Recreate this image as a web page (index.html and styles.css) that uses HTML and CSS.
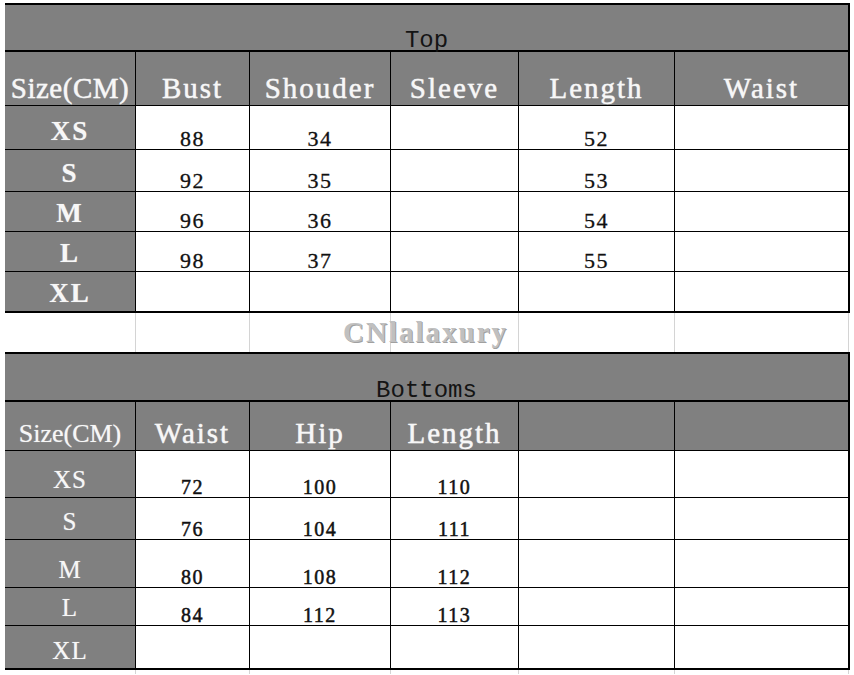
FILE: index.html
```html
<!DOCTYPE html>
<html>
<head>
<meta charset="utf-8">
<link rel="stylesheet" href="styles.css">
</head>
<body>
<div class="page">
  <div class="sheet">
    <section class="block block-top">
      <div class="title">Top</div>
      <div class="grid grid-top">
        <div class="cell head head-size">Size(CM)</div>
        <div class="cell head">Bust</div>
        <div class="cell head">Shouder</div>
        <div class="cell head">Sleeve</div>
        <div class="cell head">Length</div>
        <div class="cell head">Waist</div>

        <div class="cell label">XS</div>
        <div class="cell num">88</div>
        <div class="cell num">34</div>
        <div class="cell num"></div>
        <div class="cell num">52</div>
        <div class="cell num"></div>

        <div class="cell label">S</div>
        <div class="cell num">92</div>
        <div class="cell num">35</div>
        <div class="cell num"></div>
        <div class="cell num">53</div>
        <div class="cell num"></div>

        <div class="cell label">M</div>
        <div class="cell num">96</div>
        <div class="cell num">36</div>
        <div class="cell num"></div>
        <div class="cell num">54</div>
        <div class="cell num"></div>

        <div class="cell label">L</div>
        <div class="cell num">98</div>
        <div class="cell num">37</div>
        <div class="cell num"></div>
        <div class="cell num">55</div>
        <div class="cell num"></div>

        <div class="cell label">XL</div>
        <div class="cell num"></div>
        <div class="cell num"></div>
        <div class="cell num"></div>
        <div class="cell num"></div>
        <div class="cell num"></div>
      </div>
    </section>

    <div class="grid spacer-row">
      <div class="cell blank"></div>
      <div class="cell blank"></div>
      <div class="cell blank"></div>
      <div class="cell blank"></div>
      <div class="cell blank"></div>
      <div class="cell blank"></div>
      <span class="watermark">CNlalaxury</span>
    </div>

    <section class="block block-bottom">
      <div class="title title-bottom">Bottoms</div>
      <div class="grid grid-bottom">
        <div class="cell head head-alt">Size(CM)</div>
        <div class="cell head">Waist</div>
        <div class="cell head">Hip</div>
        <div class="cell head">Length</div>
        <div class="cell head"></div>
        <div class="cell head"></div>

        <div class="cell label label-alt">XS</div>
        <div class="cell num num-alt">72</div>
        <div class="cell num num-alt">100</div>
        <div class="cell num num-alt">110</div>
        <div class="cell num"></div>
        <div class="cell num"></div>

        <div class="cell label label-alt">S</div>
        <div class="cell num num-alt">76</div>
        <div class="cell num num-alt">104</div>
        <div class="cell num num-alt">111</div>
        <div class="cell num"></div>
        <div class="cell num"></div>

        <div class="cell label label-alt">M</div>
        <div class="cell num num-alt">80</div>
        <div class="cell num num-alt">108</div>
        <div class="cell num num-alt">112</div>
        <div class="cell num"></div>
        <div class="cell num"></div>

        <div class="cell label label-alt">L</div>
        <div class="cell num num-alt">84</div>
        <div class="cell num num-alt">112</div>
        <div class="cell num num-alt">113</div>
        <div class="cell num"></div>
        <div class="cell num"></div>

        <div class="cell label label-alt">XL</div>
        <div class="cell num"></div>
        <div class="cell num"></div>
        <div class="cell num"></div>
        <div class="cell num"></div>
        <div class="cell num"></div>
      </div>
    </section>

    <div class="grid tail-row">
      <div class="cell blank"></div>
      <div class="cell blank"></div>
      <div class="cell blank"></div>
      <div class="cell blank"></div>
      <div class="cell blank"></div>
      <div class="cell blank"></div>
    </div>
  </div>
</div>
</body>
</html>
```

FILE: styles.css
```css
* {
  box-sizing: border-box;
}

html, body {
  margin: 0;
  padding: 0;
  background: #ffffff;
}

body {
  width: 854px;
  height: 675px;
  overflow: hidden;
}

.page {
  padding: 3px 0 0 5px;
}

.sheet {
  width: 845px;
  display: flex;
  flex-direction: column;
}

.block {
  width: 845px;
  border-top: 2px solid #000;
  border-right: 2px solid #000;
  border-bottom: 2px solid #000;
  background: #000;
}

.title {
  height: 47px;
  background: #808080;
  border-bottom: 2px solid #000;
  display: flex;
  justify-content: center;
  align-items: flex-end;
  font-family: "Liberation Mono", "DejaVu Sans Mono", monospace;
  font-size: 24px;
  line-height: 18px;
  color: #141414;
  padding-bottom: 0;
}

.title-bottom {
  height: 48px;
}

.grid {
  display: grid;
  grid-template-columns: 130px 113px 140px 127px 155px 173px;
  column-gap: 1px;
  row-gap: 1px;
  background: #000;
}

.grid-top {
  grid-template-rows: 53px 43px 41px 39px 39px 39px;
}

.grid-bottom {
  grid-template-rows: 48px 46px 41px 47px 37px 42px;
}

.cell {
  display: flex;
  justify-content: center;
  align-items: flex-end;
  white-space: nowrap;
}

.head {
  background: #808080;
  color: #f7f7f7;
  font-family: "Liberation Serif", "Times New Roman", serif;
  font-size: 29px;
  letter-spacing: 2px;
  line-height: normal;
  padding-bottom: 0;
  -webkit-text-stroke: 0.3px #f7f7f7;
  text-shadow: 0 0 1px rgba(255, 255, 255, 0.6);
}

.head-size {
  letter-spacing: 0.5px;
}

.head-alt {
  font-size: 26px;
  letter-spacing: 0;
  padding-bottom: 1px;
  -webkit-text-stroke: 0;
}

.label {
  background: #808080;
  color: #f7f7f7;
  font-family: "Liberation Serif", "Times New Roman", serif;
  font-weight: bold;
  font-size: 27px;
  letter-spacing: 2px;
  line-height: normal;
  padding-bottom: 2px;
  text-shadow: 0 0 1px rgba(255, 255, 255, 0.5);
}

.label-alt {
  font-weight: normal;
  font-size: 25px;
  letter-spacing: 1px;
  padding-bottom: 3px;
}

.num {
  background: #ffffff;
  color: #111;
  font-family: "Liberation Serif", "Times New Roman", serif;
  font-size: 22px;
  letter-spacing: 1.5px;
  line-height: 20px;
  padding-bottom: 0;
  -webkit-text-stroke: 0.3px #111;
}

.num-alt {
  font-size: 20px;
  line-height: 19px;
  letter-spacing: 1.5px;
  -webkit-text-stroke: 0.5px #111;
}

.spacer-row {
  position: relative;
  width: 844px;
  height: 39px;
  grid-template-rows: 39px;
  background: #d4d4d4;
  border-right: 1px solid #d4d4d4;
}

.blank {
  background: #ffffff;
}

.watermark {
  position: absolute;
  left: 338px;
  top: 5px;
  font-family: "Liberation Serif", "Times New Roman", serif;
  font-weight: bold;
  font-size: 29px;
  letter-spacing: 2px;
  color: #c0c0c0;
  text-shadow: 1px 1px 0 #a0a0a0;
  line-height: 1;
}

.tail-row {
  width: 844px;
  height: 4px;
  grid-template-rows: 4px;
  background: #d4d4d4;
  border-right: 1px solid #d4d4d4;
}
```
